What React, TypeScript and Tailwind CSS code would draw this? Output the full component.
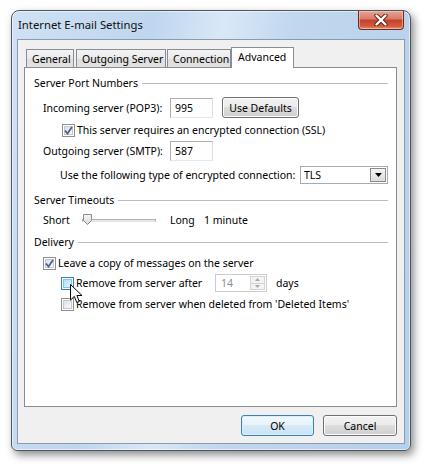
import React from 'react';

function Check({ checked = false, hover = false }: { checked?: boolean; hover?: boolean }) {
  return (
    <span
      className={`relative flex h-[13px] w-[13px] shrink-0 border bg-white p-[1px] ${
        hover ? 'border-[#3c7fb1]' : 'border-[#8e8f8f]'
      }`}
    >
      <span
        className={`flex-1 border ${
          hover
            ? 'border-[#79c6f9] bg-[linear-gradient(135deg,#b1dffd,#e9f7fe)]'
            : 'border-[#c4c7cb] bg-[linear-gradient(135deg,#dcdee0,#fbfbfb)]'
        }`}
      />
      {checked && (
        <svg className="absolute left-[1px] top-[1px]" width="9" height="9" viewBox="0 0 9 9">
          <path d="M1 4.5 L3.5 7.5 L8 1" fill="none" stroke="#4a5f97" strokeWidth="1.8" />
        </svg>
      )}
    </span>
  );
}

function Header({ label }: { label: string }) {
  return (
    <div className="flex h-[16px] items-center">
      <span>{label}</span>
      <span className="ml-[4px] h-px flex-1 bg-[#b8bcc0]" />
    </div>
  );
}

function Field({ value }: { value: string }) {
  return (
    <span className="flex h-[20px] w-[43px] items-center border border-[#abadb3] border-b-[#e3e9ef] border-r-[#dbdfe6] bg-white pl-[4px]">
      {value}
    </span>
  );
}

function Tab({ label, active = false, className = '' }: { label: string; active?: boolean; className?: string }) {
  return (
    <div
      className={`flex items-center border border-b-0 border-[#898c95] pl-[5px] ${
        active
          ? 'relative z-10 -mb-px h-[21px] bg-white pb-[2px] pl-[6px]'
          : 'h-[18px] bg-[linear-gradient(#f3f3f3,#ebebeb_50%,#dedede_51%,#e2e2e2)]'
      } ${className}`}
    >
      {label}
    </div>
  );
}

export default function App() {
  return (
    <div className="relative h-[470px] w-[430px] overflow-hidden bg-white pl-[11px] pt-[10px] font-['Noto_Sans',sans-serif] text-[10.5px] leading-[16px] text-black">
      <div className="flex h-[441px] w-[400px] flex-col rounded-b-[6px] rounded-t-[8px] border border-[#4c5661] bg-[linear-gradient(100deg,#cfe1f4_0%,#bed6ef_30%,#d9e8f7_45%,#c0d7ef_60%,#b6cfea_100%)] shadow-[inset_0_0_0_1px_rgba(255,255,255,0.55),3px_4px_9px_rgba(0,0,0,0.45)]">
        {/* title bar */}
        <div className="flex h-[28px] items-start justify-between">
          <span className="pl-[6px] pt-[6px] text-[11.3px] text-[#111]">Internet E-mail Settings</span>
          <span className="mr-[6px] flex h-[19px] w-[46px] items-center justify-center rounded-b-[4px] border border-t-0 border-[#6f2a20] bg-[linear-gradient(#e8a492,#d67a66_45%,#c2412c_50%,#d45a3e_85%,#e39a76)] shadow-[inset_0_0_0_1px_rgba(255,220,210,0.5)]">
            <svg width="14" height="12" viewBox="0 0 14 12">
              <path d="M2.5 1.5 L11.5 10.5 M11.5 1.5 L2.5 10.5" stroke="#5a2018" strokeWidth="4.2" strokeLinecap="round" />
              <path d="M2.5 1.5 L11.5 10.5 M11.5 1.5 L2.5 10.5" stroke="#ffffff" strokeWidth="2.4" strokeLinecap="round" />
            </svg>
          </span>
        </div>

        {/* client area */}
        <div className="mx-[5px] flex flex-1 flex-col border border-[#8a9bb0] bg-[#f0f0f0] pl-[6px] pr-[7px] pt-[7px]">
          <div className="flex h-[20px] items-end pl-[2px]">
            <Tab label="General" className="w-[48px]" />
            <Tab label="Outgoing Server" className="ml-[2px] w-[90px]" />
            <Tab label="Connection" className="ml-px w-[64px]" />
            <Tab label="Advanced" active className="w-[63px]" />
          </div>

          <div className="flex h-[340px] w-[373px] flex-col border border-[#898c95] bg-white pl-[9px] pr-[8px] pt-[7px]">
            <Header label="Server Port Numbers" />
            <div className="ml-[9px] mt-[6px] flex h-[21px] items-center">
              <span className="w-[127px]">Incoming server (POP3):</span>
              <Field value="995" />
              <span className="ml-[9px] flex h-[21px] w-[77px] items-center justify-center rounded-[3px] border border-[#707070] bg-[linear-gradient(#f2f2f2,#ebebeb_49%,#dddddd_50%,#cfcfcf)] shadow-[inset_0_0_0_1px_#fcfcfc]">
                Use Defaults
              </span>
            </div>
            <div className="ml-[28px] mt-[4px] flex h-[16px] items-center gap-[2px]">
              <Check checked />
              <span>This server requires an encrypted connection (SSL)</span>
            </div>
            <div className="ml-[9px] mt-[3px] flex h-[20px] items-center">
              <span className="w-[127px]">Outgoing server (SMTP):</span>
              <Field value="587" />
            </div>
            <div className="ml-[26px] mt-[5px] flex h-[18px] items-center">
              <span className="w-[240px]">Use the following type of encrypted connection:</span>
              <span className="flex h-[18px] w-[88px] items-center border border-[#a5acb5] bg-white pl-[3px] pr-px">
                <span className="flex-1">TLS</span>
                <span className="flex h-[14px] w-[16px] items-center justify-center border border-[#8c8c8c] bg-[linear-gradient(#f4f4f4,#dcdcdc)]">
                  <svg width="7" height="4" viewBox="0 0 7 4">
                    <path d="M0 0 H7 L3.5 4 Z" fill="#000" />
                  </svg>
                </span>
              </span>
            </div>

            <div className="mt-[8px]">
              <Header label="Server Timeouts" />
            </div>
            <div className="ml-[9px] mt-[4px] flex h-[16px] items-center">
              <span className="w-[39px]">Short</span>
              <span className="relative flex h-[16px] w-[74px] items-center">
                <span className="h-[3px] w-full border border-[#b0b0b0] border-b-[#e4e4e4] bg-[#e7eaea]" />
                <svg className="absolute left-[1px] top-[2px]" width="10" height="11" viewBox="0 0 10 11">
                  <defs>
                    <linearGradient id="th" x1="0" y1="0" x2="0" y2="1">
                      <stop offset="0" stopColor="#f7f7f7" />
                      <stop offset="1" stopColor="#d9d9d9" />
                    </linearGradient>
                  </defs>
                  <path d="M0.5 0.5 H8.5 V6.5 L4.5 10.5 L0.5 6.5 Z" fill="url(#th)" stroke="#8a8a8a" />
                </svg>
              </span>
              <span className="ml-[14px] w-[34px]">Long</span>
              <span>1 minute</span>
            </div>

            <div className="mt-[6px]">
              <Header label="Delivery" />
            </div>
            <div className="ml-[9px] mt-[5px] flex h-[16px] items-center gap-[2px]">
              <Check checked />
              <span>Leave a copy of messages on the server</span>
            </div>
            <div className="ml-[27px] mt-[3px] flex h-[18px] items-center">
              <Check hover />
              <span className="ml-[2px] w-[139px]">Remove from server after</span>
              <span className="flex h-[18px] w-[52px] items-center border border-[#c9ccd1] bg-white pl-[5px] pr-px text-[#8d8d8d]">
                <span className="flex-1">14</span>
                <span className="flex h-[14px] w-[15px] flex-col border border-[#d3d3d3] bg-[#f3f3f3]">
                  <span className="flex flex-1 items-center justify-center border-b border-[#d3d3d3]">
                    <svg width="5" height="3" viewBox="0 0 5 3">
                      <path d="M0 3 H5 L2.5 0 Z" fill="#a8a8a8" />
                    </svg>
                  </span>
                  <span className="flex flex-1 items-center justify-center">
                    <svg width="5" height="3" viewBox="0 0 5 3">
                      <path d="M0 0 H5 L2.5 3 Z" fill="#a8a8a8" />
                    </svg>
                  </span>
                </span>
              </span>
              <span className="ml-[9px]">days</span>
            </div>
            <div className="ml-[27px] mt-[4px] flex h-[16px] items-center gap-[2px]">
              <Check />
              <span>Remove from server when deleted from 'Deleted Items'</span>
            </div>
          </div>

          <div className="mt-[8px] flex justify-end gap-[9px]">
            <span className="flex h-[21px] w-[73px] items-center justify-center rounded-[3px] border border-[#3c7fb1] bg-[linear-gradient(#f1f8fd,#e6f2fa_49%,#d6eaf8_50%,#cae3f5)] shadow-[inset_0_0_0_1px_#d9f0fc]">
              OK
            </span>
            <span className="flex h-[21px] w-[74px] items-center justify-center rounded-[3px] border border-[#707070] bg-[linear-gradient(#f2f2f2,#ebebeb_49%,#dddddd_50%,#cfcfcf)] shadow-[inset_0_0_0_1px_#fcfcfc]">
              Cancel
            </span>
          </div>
        </div>
        <div className="h-[6px]" />
      </div>

      {/* mouse pointer */}
      <svg className="absolute left-[70px] top-[284px]" width="13" height="20" viewBox="0 0 13 20">
        <path d="M0.5 0.5 V16 L4.3 12.4 L6.8 18.5 L9.3 17.4 L6.9 11.5 H12 Z" fill="#fff" stroke="#000" strokeLinejoin="round" />
      </svg>
    </div>
  );
}
